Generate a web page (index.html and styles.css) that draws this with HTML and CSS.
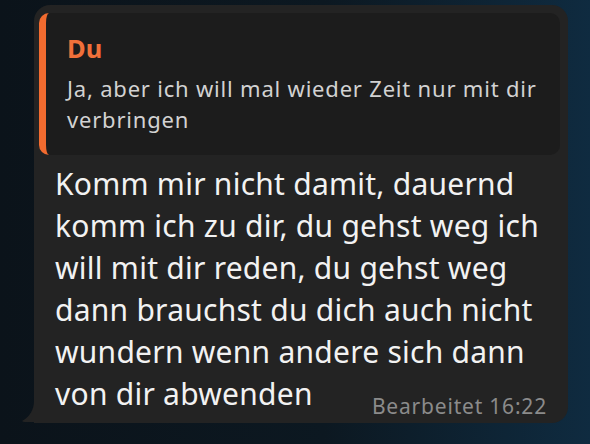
FILE: index.html
```html
<!DOCTYPE html>
<html>
<head>
<meta charset="utf-8">
<link rel="stylesheet" href="styles.css">
</head>
<body>
<div class="bubble">
  <div class="quote">
    <div class="quote-name">Du</div>
    <div class="quote-text">Ja, aber ich will mal wieder Zeit nur mit dir<br>verbringen</div>
  </div>
  <div class="message">Komm mir nicht damit, dauernd<br>komm ich zu dir, du gehst weg ich<br>will mit dir reden, du gehst weg<br>dann brauchst du dich auch nicht<br>wundern wenn andere sich dann<br>von dir abwenden<span class="meta">Bearbeitet 16:22</span></div>
  <svg class="tail" width="16" height="22" viewBox="0 0 16 22"><path d="M12 0 C12 8 8 16 0 20 Q1 21 3 21 L16 21 L16 0 Z" fill="#232323"/></svg>
</div>
</body>
</html>
```
FILE: styles.css
```css
html, body {
  margin: 0;
  padding: 0;
}
body {
  width: 590px;
  height: 444px;
  overflow: hidden;
  background: linear-gradient(90deg, #0b131a 0%, #0c1821 55%, #0f2b40 100%);
  font-family: "Noto Sans", Roboto, sans-serif;
}
.bubble {
  position: relative;
  box-sizing: border-box;
  width: 534px;
  margin: 5px 0 0 34px;
  padding: 8px 8px 8px 5px;
  background: #232323;
  border-radius: 16px 16px 16px 0;
}
.quote {
  background: #1c1c1c;
  border-left: 7px solid #f26b2f;
  border-radius: 10px;
  padding: 20px 12px 20px 21px;
}
.quote-name {
  color: #f0703a;
  font-size: 25.5px;
  font-weight: 700;
  line-height: 30px;
  margin-bottom: 10px;
}
.quote-text {
  color: #d2d2d2;
  font-size: 22px;
  letter-spacing: 0.8px;
  line-height: 31px;
  white-space: nowrap;
}
.message {
  margin-top: 8px;
  padding: 0 13px 0 16px;
  color: #f2f2f2;
  font-size: 30px;
  letter-spacing: 0.25px;
  line-height: 42px;
  white-space: nowrap;
}
.meta {
  float: right;
  margin-top: 21px;
  color: #8b8b8b;
  font-size: 21px;
  letter-spacing: 0.8px;
  line-height: 24px;
}
.tail {
  position: absolute;
  left: -12px;
  bottom: 0;
}
```
